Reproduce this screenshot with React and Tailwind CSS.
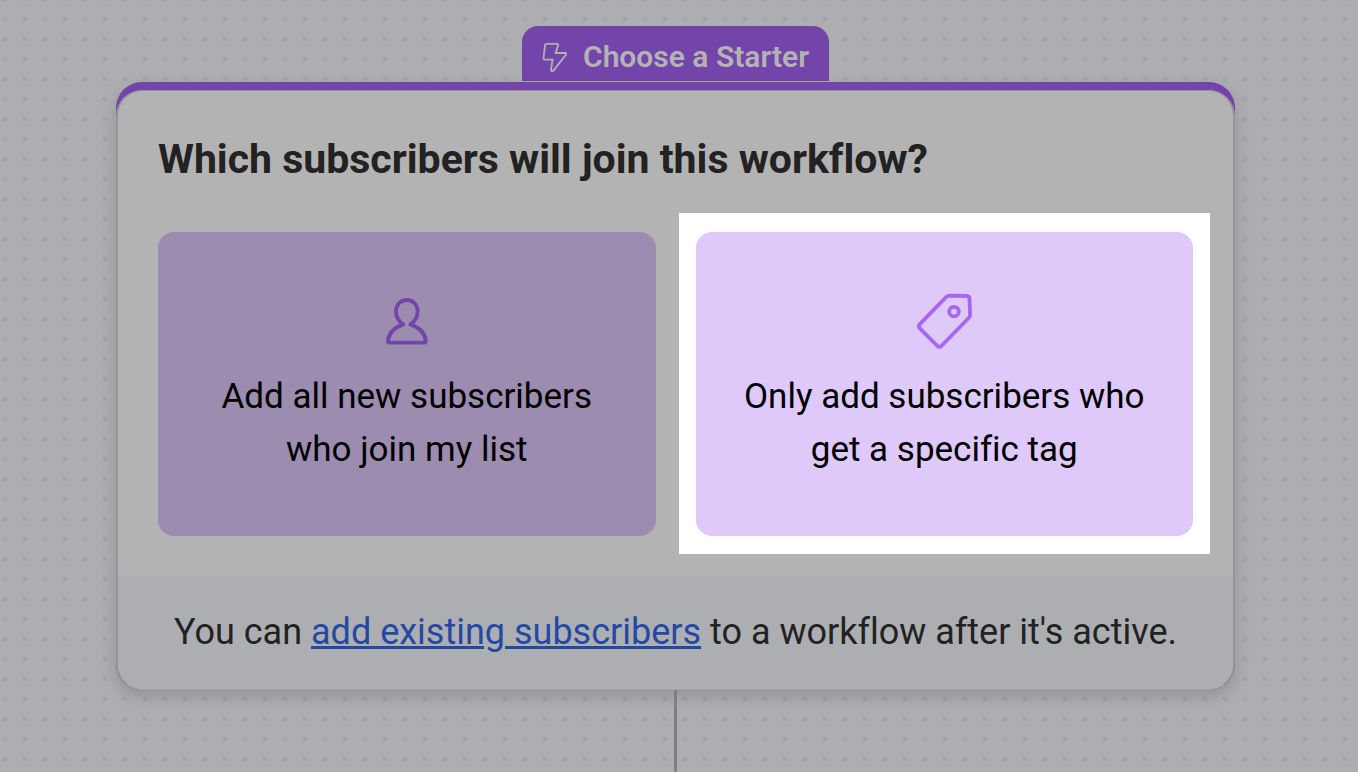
import React from 'react'

const BoltIcon = () => (
    <svg className="h-[30px] w-[26px] shrink-0" viewBox="0 0 26 30" fill="none" stroke="currentColor" strokeWidth="1.8" strokeLinejoin="round" aria-hidden="true">
        <path d="M4.6 1.9 H15 Q16.6 1.9 16.1 3.4 L13.6 11 H23 Q24.8 11.2 23.9 12.7 L11.5 28.6 Q9.4 30 9 27.8 L10.6 17.6 H2.8 Q1.4 17.4 1.5 16 L3 3.3 Q3.3 1.9 4.6 1.9 Z" />
    </svg>
)

const PersonIcon = () => (
    <svg className="size-14" viewBox="0 0 56 56" fill="none" stroke="currentColor" strokeWidth="3.8" strokeLinecap="round" strokeLinejoin="round" aria-hidden="true">
        <path d="M24.4 31.4 C19.9 28.4 17 23.4 17 18.4 C17 11.7 21.4 7 27.8 7 C34.2 7 38.6 11.7 38.6 18.4 C38.6 23.4 35.9 28.4 31.3 31.4 C39.4 34.2 46 39.9 46.8 48 Q46.9 49.6 45.4 49.6 H10.2 Q8.8 49.6 8.9 48 C9.7 39.9 16.4 34.2 24.4 31.4 Z" />
    </svg>
)

const TagIcon = () => (
    <svg className="size-14" viewBox="0 0 56 56" fill="none" stroke="currentColor" strokeWidth="3.8" strokeLinejoin="round" aria-hidden="true">
        <path d="M33.6 2.6 L51 3 Q53.4 3.2 53.5 5.6 L54.1 21.5 Q54.1 23.6 52.7 25 L25.4 53 Q23.4 54.7 21.4 53 L3.6 35.2 Q2.2 33.3 3.6 31.4 L30.2 4 Q31.6 2.6 33.6 2.6 Z" />
        <circle cx="38" cy="18.6" r="4.8" />
    </svg>
)

const StarterOption = ({ icon, label, className }) => (
    <button
        type="button"
        className={`flex h-full w-full flex-col items-center rounded-2xl px-10 pt-[61px] pb-[60px] text-center text-[35px] leading-[53px] text-black ${className}`}
    >
        <span className="mb-[21px]">{icon}</span>
        <span>{label}</span>
    </button>
)

const App = () => {
    return (
        <main className="flex min-h-screen flex-col bg-[#adaeb1] bg-[radial-gradient(circle,#a0a5b1_2px,transparent_3px)] bg-[size:20px_20px] bg-position-[-5px_9px] pt-[26px] pr-[123px] pl-[116px] font-['Roboto',sans-serif] text-[#222222] [font-variant-ligatures:none]">
            <div className="mb-px flex h-[55px] items-center gap-[15px] self-center rounded-t-2xl bg-[#7345ab] px-5 pt-[6px] text-[#b3b3b3]">
                <BoltIcon />
                <span className="text-[30px] leading-10 font-semibold">Choose a Starter</span>
            </div>

            <section className="rounded-[26px] bg-[#7345ab] pt-2 shadow-[0_6px_16px_rgba(0,0,0,0.16)]">
                <div className="overflow-hidden rounded-[26px] border border-x-2 border-x-[#96939c] border-t-[#98969b] border-b-[#a3a4a7] bg-[#b3b3b3]">
                    <div className="px-10 pt-10 pb-10">
                        <h1 className="mb-[45px] text-[41px] leading-[56px] font-bold">Which subscribers will join this workflow?</h1>
                        <div className="grid grid-cols-2 gap-10">
                            <StarterOption
                                icon={<PersonIcon />}
                                label="Add all new subscribers who join my list"
                                className="bg-[#9c8cb0] [&_svg]:text-[#7345ab]"
                            />
                            {/* Highlighted choice */}
                            <div className="-mx-[17px] -mt-[19px] -mb-[18px] bg-white px-[17px] pt-[19px] pb-[18px]">
                                <StarterOption
                                    icon={<TagIcon />}
                                    label="Only add subscribers who get a specific tag"
                                    className="bg-[#dec9fa] [&_svg]:text-[#a566f6]"
                                />
                            </div>
                        </div>
                    </div>
                    <p className="bg-[#adaeb2] px-4 pt-[28px] pb-[29px] text-center text-[36px] leading-[56px]">
                        You can{' '}
                        <a href="#existing" className="text-[#2449a3] underline decoration-[3px] underline-offset-2">add existing subscribers</a>
                        {' '}to a workflow after it's active.
                    </p>
                </div>
            </section>

            {/* Connector to the next step */}
            <div className="w-[3px] flex-1 self-center bg-[#7e7f82]" />
        </main>
    )
}

export default App
